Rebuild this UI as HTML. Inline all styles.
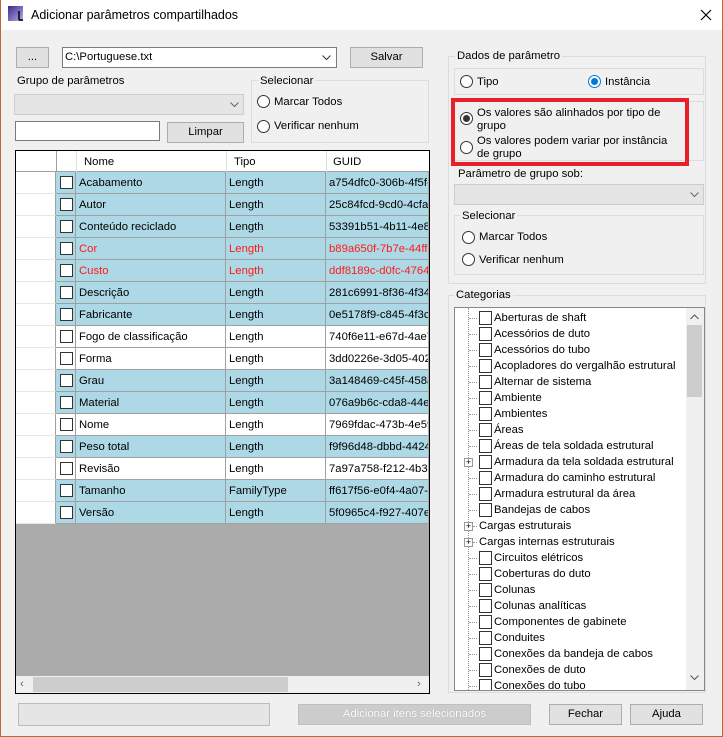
<!DOCTYPE html>
<html><head><meta charset="utf-8"><style>
*{box-sizing:border-box;margin:0;padding:0}
body{width:723px;height:737px;overflow:hidden;background:#f0f0f0;font-family:"Liberation Sans",sans-serif;font-size:11.3px;color:#000;position:relative}
.a{position:absolute}
.btn{position:absolute;background:#e1e1e1;border:1px solid #adadad;text-align:center;line-height:19px}
.box{position:absolute;border:1px solid #dcdcdc}
.lbl{position:absolute;background:#f0f0f0;padding:0 2px;line-height:14px}
.rad{position:absolute;width:13px;height:13px;border:1px solid #333;border-radius:50%;background:#fff}
.rad.on::after{content:"";position:absolute;left:2px;top:2px;width:7px;height:7px;border-radius:50%;background:#333}
.rad.blue{border-color:#0078d7}.rad.blue::after{background:#0078d7}
.t{position:absolute;line-height:14px;white-space:nowrap}
.row{position:absolute;left:16px;width:412px;height:22px}
.row div{position:absolute;top:0;height:22px;border-right:1px solid #a0a0a0;border-bottom:1px solid #a0a0a0;line-height:22px;padding-left:3px;white-space:nowrap;overflow:hidden}
.cb{position:absolute;width:13px;height:13px;border:1px solid #333;background:#fff}
.ti{position:absolute;left:24px;height:16px;line-height:16px;white-space:nowrap}
.ti .cb{left:0;top:1px;width:13px;height:14px}
.ti span{position:absolute;left:15px;top:0}
.dot{position:absolute;border-top:1px dotted #999;width:8px}
</style></head><body>
<div class="a" style="left:0;top:0;width:723px;height:30px;background:#fff"></div>
<svg class="a" style="left:8px;top:6px" width="16" height="16"><defs><linearGradient id="g" x1="0" y1="0" x2="1" y2="1"><stop offset="0" stop-color="#3a2a8a"/><stop offset="1" stop-color="#b8a8f0"/></linearGradient></defs><rect x="0" y="0" width="15" height="15" fill="url(#g)"/><path d="M11 5V14M11 14H15" stroke="#000" stroke-width="1.5"/></svg>
<div class="t" style="left:31px;top:8px;font-size:12.5px">Adicionar parâmetros compartilhados</div>
<svg class="a" style="left:700px;top:9px" width="12" height="12"><path d="M1 1L11 11M11 1L1 11" stroke="#000" stroke-width="1.2"/></svg>
<div class="a" style="left:0;top:0;width:1px;height:737px;background:#b86a3a"></div>
<div class="a" style="left:722px;top:0;width:1px;height:737px;background:#c9621f"></div>
<div class="a" style="left:0;top:736px;width:723px;height:1px;background:#b86a3a"></div>

<div class="btn" style="left:16px;top:47px;width:33px;height:21px">...</div>
<div class="a" style="left:62px;top:47px;width:275px;height:21px;background:#fff;border:1px solid #7a7a7a"></div>
<div class="t" style="left:65px;top:50px">C:\Portuguese.txt</div>
<svg class="a" style="left:322px;top:55px" width="9" height="6"><path d="M0.5 0.5L4.5 4.5L8.5 0.5" stroke="#333" fill="none"/></svg>
<div class="btn" style="left:350px;top:47px;width:73px;height:21px">Salvar</div>

<div class="t" style="left:17px;top:74px">Grupo de parâmetros</div>
<div class="a" style="left:14px;top:94px;width:230px;height:21px;background:#e5e5e5;border:1px solid #ccc"></div>
<svg class="a" style="left:230px;top:102px" width="9" height="6"><path d="M0.5 0.5L4.5 4.5L8.5 0.5" stroke="#666" fill="none"/></svg>
<div class="a" style="left:15px;top:121px;width:145px;height:20px;background:#fff;border:1px solid #7a7a7a"></div>
<div class="btn" style="left:167px;top:122px;width:77px;height:21px">Limpar</div>
<div class="box" style="left:251px;top:80px;width:178px;height:63px"></div>
<div class="lbl" style="left:258px;top:74px">Selecionar</div>
<div class="rad" style="left:257px;top:95px"></div><div class="t" style="left:274px;top:95px">Marcar Todos</div>
<div class="rad" style="left:257px;top:120px"></div><div class="t" style="left:274px;top:119px">Verificar nenhum</div>

<div class="a" style="left:15px;top:150px;width:415px;height:544px;border:1px solid #000;background:#ababab"></div>
<div class="a" style="left:16px;top:151px;width:413px;height:21px;background:#fff;border-bottom:1px solid #a0a0a0"></div>
<div class="a" style="left:56px;top:151px;width:1px;height:21px;background:#a0a0a0"></div>
<div class="a" style="left:76px;top:151px;width:1px;height:21px;background:#e0e0e0"></div>
<div class="a" style="left:226px;top:151px;width:1px;height:21px;background:#e0e0e0"></div>
<div class="a" style="left:326px;top:151px;width:1px;height:21px;background:#e0e0e0"></div>
<div class="t" style="left:84px;top:155px">Nome</div>
<div class="t" style="left:234px;top:155px">Tipo</div>
<div class="t" style="left:333px;top:155px">GUID</div>
<div id="rows"></div>
<div class="a" style="left:16px;top:676px;width:413px;height:17px;background:#f0f0f0"></div>
<div class="a" style="left:33px;top:677px;width:255px;height:15px;background:#cdcdcd"></div>
<div class="t" style="left:20px;top:677px;color:#666">‹</div>
<div class="t" style="left:417px;top:677px;color:#666">›</div>

<div class="a" style="left:18px;top:703px;width:252px;height:23px;background:#e5e5e5;border:1px solid #bcbcbc"></div>
<div class="btn" style="left:298px;top:704px;width:233px;height:21px;background:#cccccc;border-color:#bfbfbf;color:#fff;text-shadow:0 0 1px #999">Adicionar itens selecionados</div>
<div class="btn" style="left:549px;top:704px;width:73px;height:21px">Fechar</div>
<div class="btn" style="left:630px;top:704px;width:73px;height:21px">Ajuda</div>

<div class="box" style="left:448px;top:56px;width:258px;height:228px"></div>
<div class="lbl" style="left:455px;top:49px">Dados de parâmetro</div>
<div class="box" style="left:454px;top:68px;width:250px;height:27px"></div>
<div class="rad" style="left:460px;top:75px"></div><div class="t" style="left:477px;top:75px">Tipo</div>
<div class="rad on blue" style="left:588px;top:75px"></div><div class="t" style="left:605px;top:75px">Instância</div>
<div class="box" style="left:454px;top:101px;width:250px;height:60px"></div>
<div class="a" style="left:451px;top:98px;width:238px;height:68px;border:4px solid #e8202a"></div>
<div class="rad on" style="left:460px;top:112px"></div>
<div class="t" style="left:477px;top:107px;line-height:13px">Os valores são alinhados por tipo de<br>grupo</div>
<div class="rad" style="left:460px;top:141px"></div>
<div class="t" style="left:477px;top:135px;line-height:13px">Os valores podem variar por instância<br>de grupo</div>
<div class="t" style="left:458px;top:167px">Parâmetro de grupo sob:</div>
<div class="a" style="left:454px;top:184px;width:250px;height:21px;background:#e5e5e5;border:1px solid #ccc"></div>
<svg class="a" style="left:690px;top:192px" width="9" height="6"><path d="M0.5 0.5L4.5 4.5L8.5 0.5" stroke="#666" fill="none"/></svg>
<div class="box" style="left:454px;top:215px;width:250px;height:60px"></div>
<div class="lbl" style="left:460px;top:209px">Selecionar</div>
<div class="rad" style="left:462px;top:231px"></div><div class="t" style="left:479px;top:230px">Marcar Todos</div>
<div class="rad" style="left:462px;top:253px"></div><div class="t" style="left:479px;top:253px">Verificar nenhum</div>

<div class="box" style="left:448px;top:295px;width:258px;height:398px"></div>
<div class="lbl" style="left:454px;top:288px">Categorias</div>
<div class="a" style="left:454px;top:307px;width:251px;height:384px;background:#fff;border:1px solid #828790;overflow:hidden">
<div class="a" style="left:13px;top:0;height:384px;border-left:1px dotted #999"></div>
<div id="tree" class="a" style="left:0;top:0;width:250px;height:382px"></div>
<div class="a" style="left:231px;top:0;width:18px;height:382px;background:#f0f0f0"></div>
<div class="a" style="left:232px;top:17px;width:15px;height:72px;background:#cdcdcd"></div>
<svg class="a" style="left:235px;top:6px" width="9" height="6"><path d="M0.5 5L4.5 1L8.5 5" stroke="#555" fill="none"/></svg>
<svg class="a" style="left:235px;top:367px" width="9" height="6"><path d="M0.5 0.5L4.5 4.5L8.5 0.5" stroke="#555" fill="none"/></svg>
</div>
<script>
var R=[["Acabamento","Length","a754dfc0-306b-4f5f-b",1],["Autor","Length","25c84fcd-9cd0-4cfa-",1],["Conteúdo reciclado","Length","53391b51-4b11-4e8a",1],["Cor","Length","b89a650f-7b7e-44ff-8",1,1],["Custo","Length","ddf8189c-d0fc-4764-",1,1],["Descrição","Length","281c6991-8f36-4f34-",1],["Fabricante","Length","0e5178f9-c845-4f3c-",1],["Fogo de classificação","Length","740f6e11-e67d-4ae7",0],["Forma","Length","3dd0226e-3d05-402a",0],["Grau","Length","3a148469-c45f-458a",1],["Material","Length","076a9b6c-cda8-44ea",1],["Nome","Length","7969fdac-473b-4e59",0],["Peso total","Length","f9f96d48-dbbd-4424-",1],["Revisão","Length","7a97a758-f212-4b3d",0],["Tamanho","FamilyType","ff617f56-e0f4-4a07-a",1],["Versão","Length","5f0965c4-f927-407e-",1]];
var h="";R.forEach(function(r,i){var bg=r[3]?"#add8e6":"#fff",c=r[4]?"color:#ff1a1a;":"";
h+='<div class="row" style="top:'+(172+i*22)+'px"><div style="left:0;width:40px;background:#fff;border-right-color:#a0a0a0;border-bottom-color:#e6e6e6"></div><div style="left:40px;width:20px;background:'+bg+'"><span class="cb" style="left:4px;top:4px"></span></div><div style="left:60px;width:150px;background:'+bg+';'+c+'">'+r[0]+'</div><div style="left:210px;width:100px;background:'+bg+';'+c+'">'+r[1]+'</div><div style="left:310px;width:102px;border-right:none;background:'+bg+';'+c+'">'+r[2]+'</div></div>';});
document.getElementById("rows").innerHTML=h;
var T=["Aberturas de shaft","Acessórios de duto","Acessórios do tubo","Acopladores do vergalhão estrutural","Alternar de sistema","Ambiente","Ambientes","Áreas","Áreas de tela soldada estrutural","+Armadura da tela soldada estrutural","Armadura do caminho estrutural","Armadura estrutural da área","Bandejas de cabos","*Cargas estruturais","*Cargas internas estruturais","Circuitos elétricos","Coberturas do duto","Colunas","Colunas analíticas","Componentes de gabinete","Conduites","Conexões da bandeja de cabos","Conexões de duto","Conexões do tubo"];
var t="";T.forEach(function(s,i){var y=2+i*16,p=s[0];
var pb='<div class="a" style="left:9px;top:'+(y+4)+'px;width:9px;height:9px;border:1px solid #999;background:#fff;font-size:9px;line-height:7px;text-align:center">+</div>';
if(p=="*"){s=s.slice(1);t+=pb+'<div class="dot" style="left:18px;top:'+(y+8)+'px;width:4px"></div><div class="t" style="left:24px;top:'+(y+1)+'px">'+s+'</div>';return;}
if(p=="+"){s=s.slice(1);t+=pb;}else t+='<div class="dot" style="left:14px;top:'+(y+8)+'px"></div>';
t+='<div class="ti" style="top:'+y+'px"><span class="cb"></span><span>'+s+'</span></div>';});
document.getElementById("tree").innerHTML=t;
</script>
</body></html>
